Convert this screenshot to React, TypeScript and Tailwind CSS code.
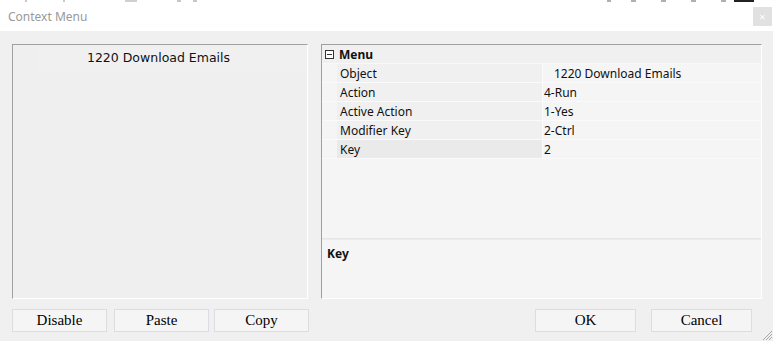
import React from "react";

const rows: { name: string; value: string; indent?: boolean; sel?: boolean }[] = [
  { name: "Object", value: "1220 Download Emails", indent: true },
  { name: "Action", value: "4-Run" },
  { name: "Active Action", value: "1-Yes" },
  { name: "Modifier Key", value: "2-Ctrl" },
  { name: "Key", value: "2", sel: true },
];

function Btn({ label, w }: { label: string; w: string }) {
  return (
    <div
      className={`${w} h-[23px] flex items-center justify-center bg-[#f5f5f5] border border-[#dcdde2] text-[15px] text-black leading-none`}
      style={{ fontFamily: '"Liberation Serif", "Times New Roman", serif' }}
    >
      {label}
    </div>
  );
}

export default function App() {
  const sans = { fontFamily: '"Noto Sans", "Open Sans", sans-serif' };
  return (
    <div className="w-[773px] h-[341px] bg-[#f0f0f0] flex flex-col overflow-hidden relative">
      {/* title bar */}
      <div className="h-[31px] bg-white flex flex-col shrink-0">
        <div className="h-[2px] flex">
          <div className="w-[25px]" />
          <div className="w-[2px] bg-[#c8c8c8]" />
          <div className="w-[36px]" />
          <div className="w-[2px] bg-[#c8c8c8]" />
          <div className="w-[60px]" />
          <div className="w-[12px] bg-[#d0d0d0]" />
          <div className="w-[40px]" />
          <div className="w-[4px] bg-[#c8c8c8]" />
          <div className="w-[12px]" />
          <div className="w-[4px] bg-[#c8c8c8]" />
          <div className="w-[410px]" />
          <div className="w-[4px] bg-[#b0b0b0]" />
          <div className="w-[20px]" />
          <div className="w-[5px] bg-[#b0b0b0]" />
          <div className="w-[25px]" />
          <div className="w-[5px] bg-[#b0b0b0]" />
          <div className="w-[25px]" />
          <div className="w-[5px] bg-[#b0b0b0]" />
          <div className="w-[25px]" />
          <div className="w-[5px] bg-[#b0b0b0]" />
          <div className="w-[8px]" />
          <div className="w-[20px] bg-[#222]" />
        </div>
        <div className="flex-1 flex items-center justify-between pl-[8px] pr-[1px]">
          <span className="text-[12px] text-[#999] leading-none" style={sans}>
            Context Menu
          </span>
          <div className="w-[19px] h-[19px] bg-[#e1e1e1] flex items-center justify-center text-white text-[11px] leading-none" style={sans}>
            ×
          </div>
        </div>
      </div>

      {/* body */}
      <div className="flex pl-[12px] pt-[13px] gap-[13px]">
        {/* left panel */}
        <div className="w-[296px] h-[255px] bg-[#efeff0] border-t border-l border-[#a0a0a0] border-r border-r-white border-b border-b-white flex flex-col">
          <div className="ml-[25px] h-[27px] bg-[#f0f0f1] flex items-center justify-center pr-[28px]">
            <span
              className="text-[12.5px] text-[#111] leading-none"
              style={{ fontFamily: '"DejaVu Sans", Verdana, sans-serif' }}
            >
              1220 Download Emails
            </span>
          </div>
        </div>

        {/* right panel: property grid */}
        <div
          className="w-[441px] h-[255px] bg-[#f5f5f5] border-t border-l border-[#a0a0a0] border-r border-r-white border-b border-b-white flex flex-col text-[12px] text-[#111]"
          style={sans}
        >
          {/* header */}
          <div className="h-[19px] bg-[#f0f0f0] flex items-center border-b border-[#f8f8f8]">
            <div className="w-[15px] flex justify-center">
              <div className="w-[9px] h-[9px] border border-[#333] flex items-center justify-center bg-white">
                <div className="w-[5px] h-[1px] bg-[#333]" />
              </div>
            </div>
            <span className="font-bold pl-[2px] pt-[1px] leading-none">Menu</span>
          </div>
          {rows.map((r) => (
            <div key={r.name} className="h-[19px] flex border-b border-[#fafafa]">
              <div className="w-[15px] bg-[#f5f5f5]" />
              <div className={`w-[205px] flex items-center pl-[3px] pt-[2px] leading-none ${r.sel ? "bg-[#eaeaea]" : "bg-[#f0f0f0]"}`}>
                {r.name}
              </div>
              <div className="w-[1px] bg-[#fafafa]" />
              <div className={`flex-1 flex items-center pt-[2px] leading-none bg-[#f5f5f5] ${r.indent ? "pl-[11px]" : "pl-[1px]"}`}>
                {r.value}
              </div>
            </div>
          ))}
          <div className="flex-1" />
          <div className="h-[2px] bg-[#ececec] border-t border-[#e6e6e6]" />
          <div className="h-[58px] bg-[#f5f5f5] pl-[5px] pt-[5px]">
            <span className="font-bold leading-none">Key</span>
          </div>
        </div>
      </div>

      {/* buttons */}
      <div className="flex pl-[12px] mt-[10px]">
        <Btn label="Disable" w="w-[95px]" />
        <div className="w-[7px]" />
        <Btn label="Paste" w="w-[95px]" />
        <div className="w-[5px]" />
        <Btn label="Copy" w="w-[95px]" />
        <div className="w-[226px]" />
        <Btn label="OK" w="w-[101px]" />
        <div className="w-[15px]" />
        <Btn label="Cancel" w="w-[101px]" />
      </div>

      {/* resize grip */}
      <svg className="absolute right-0 bottom-0" width="13" height="13" viewBox="0 0 13 13">
        <line x1="12" y1="3" x2="3" y2="12" stroke="#a8a8a8" strokeWidth="1" />
        <line x1="12" y1="6" x2="6" y2="12" stroke="#a8a8a8" strokeWidth="1" />
        <line x1="12" y1="9" x2="9" y2="12" stroke="#a8a8a8" strokeWidth="1" />
      </svg>
    </div>
  );
}
